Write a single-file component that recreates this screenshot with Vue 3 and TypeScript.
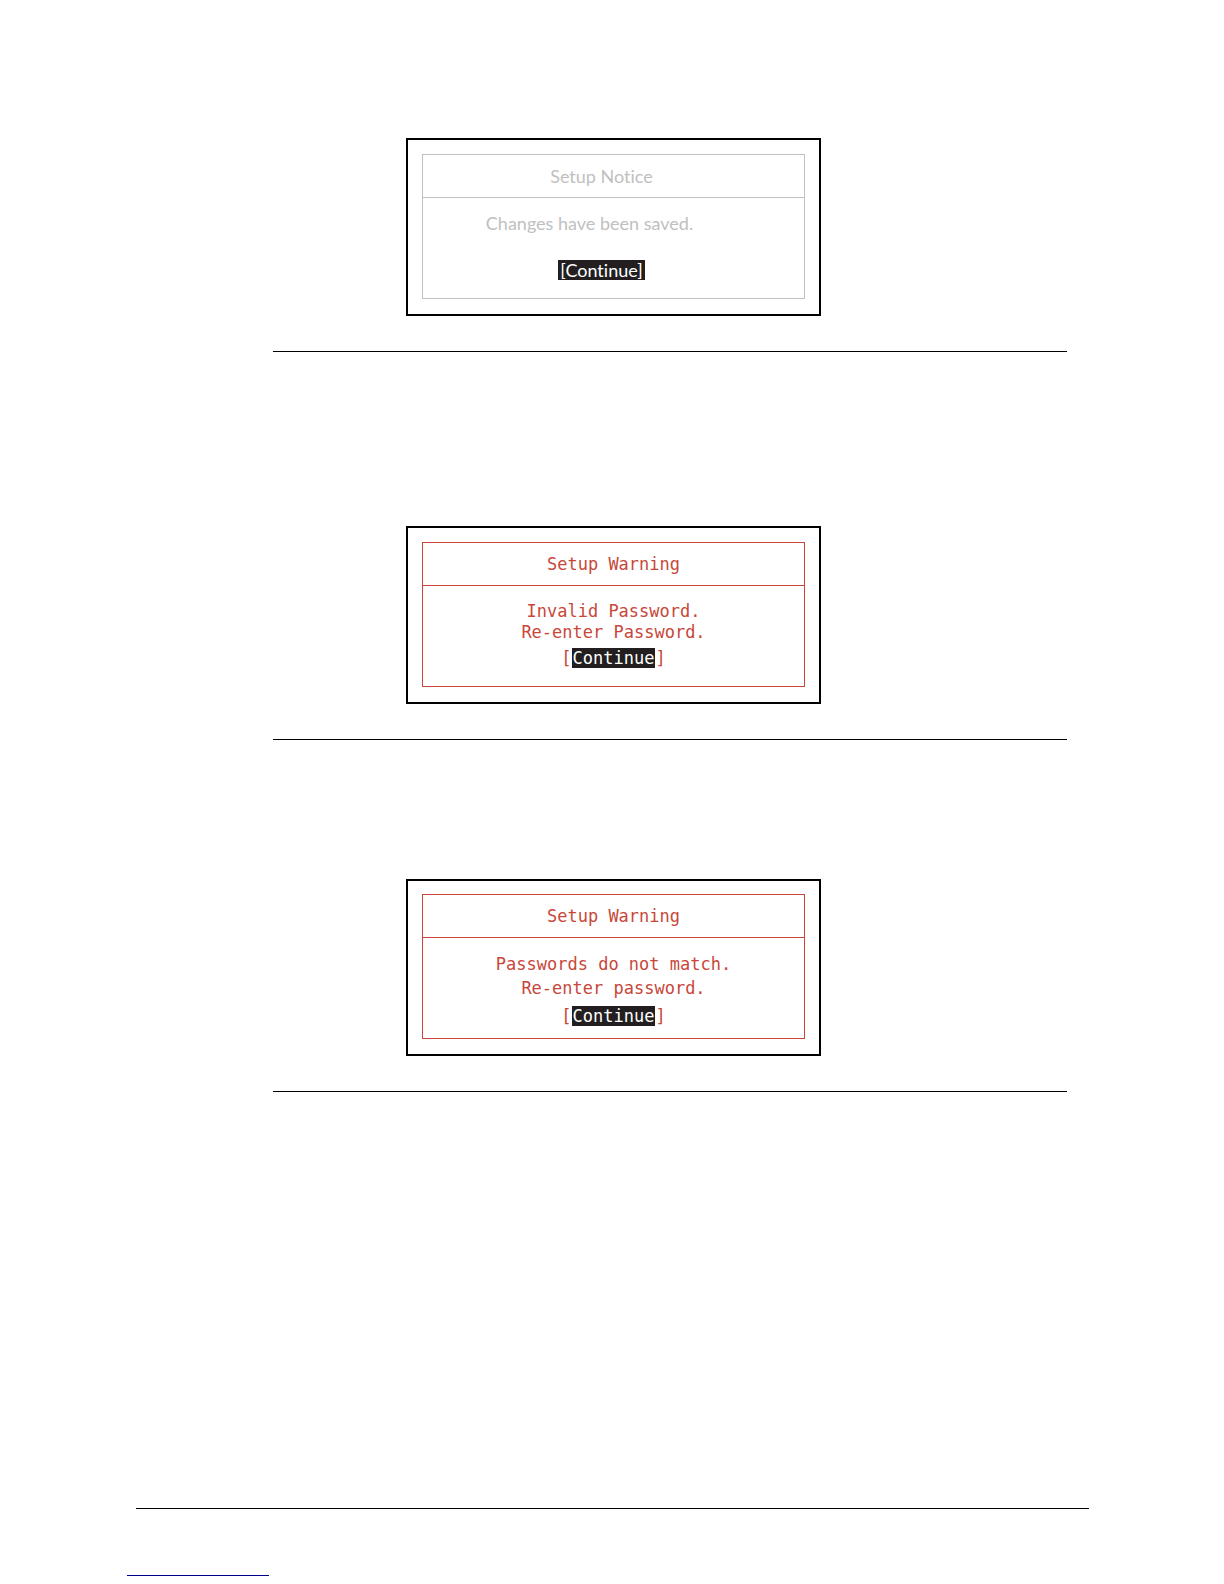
<script setup lang="ts">
interface Dialog {
  id: string
  kind: 'notice' | 'warning' | 'warning roomy'
  title: string
  lines: string[]
}

const dialogs: Dialog[] = [
  { id: 'saved', kind: 'notice', title: 'Setup Notice', lines: ['Changes have been saved.'] },
  { id: 'invalid', kind: 'warning', title: 'Setup Warning', lines: ['Invalid Password.', 'Re-enter Password.'] },
  { id: 'mismatch', kind: 'warning roomy', title: 'Setup Warning', lines: ['Passwords do not match.', 'Re-enter password.'] },
]
</script>

<template>
  <div class="page">
    <main class="content">
      <section v-for="d in dialogs" :key="d.id" class="entry" :class="d.kind">
        <div class="frame">
          <div class="panel">
            <h2 class="title">{{ d.title }}</h2>
            <div class="body">
              <p v-for="line in d.lines" :key="line" class="line">{{ line }}</p>
              <div class="actions">
                <button v-if="d.kind === 'notice'" type="button" class="continue">[Continue]</button>
                <template v-else>
                  <span>[</span><button type="button" class="continue">Continue</button><span>]</span>
                </template>
              </div>
            </div>
          </div>
        </div>
      </section>
    </main>
    <footer class="footer">
      <hr class="footer-rule">
      <hr class="link-rule">
    </footer>
  </div>
</template>

<style>
body {
  margin: 0;
  background: #fff;
}
</style>

<style scoped>
.page {
  display: flex;
  flex-direction: column;
  min-height: 100vh;
  box-sizing: border-box;
  padding: 138px 127px 8px;
}
.content {
  margin: 0 30px 0 146px;
}
.entry {
  padding: 0 0 35px 133px;
  border-bottom: 1px solid #000;
  font-variant-ligatures: none;
}
.entry + .entry {
  margin-top: 174px;
}
.entry.roomy {
  margin-top: 139px;
}
.frame {
  box-sizing: border-box;
  max-width: 415px;
  padding: 14px 14px 15px;
  border: 2px solid #000;
}
.panel {
  border: 1px solid currentColor;
  text-align: center;
}
.title {
  margin: 0;
  border-bottom: 1px solid currentColor;
  font-size: inherit;
  font-weight: 400;
  line-height: 42px;
}
.body {
  padding: 15px 0 18px;
}
.line {
  margin: 0;
  line-height: 21px;
}
.actions {
  display: flex;
  justify-content: center;
  margin-top: 5px;
  line-height: 20px;
}
.continue {
  height: 20px;
  padding: 0 1px;
  border: 0;
  background: #231f20;
  color: #fff;
  font: inherit;
  font-variant-ligatures: none;
  line-height: 20px;
}
.warning {
  font-family: "DejaVu Sans Mono", monospace;
  font-size: 17px;
}
.warning .panel {
  color: #c8473a;
}
.roomy .frame {
  padding-top: 13px;
}
.roomy .body {
  padding: 14px 0 12px;
}
.roomy .line {
  line-height: 24px;
}
.roomy .actions {
  margin-top: 6px;
}
.notice {
  font-family: Lato, sans-serif;
  font-size: 18px;
}
.notice .panel {
  color: #c0c0c0;
}
.notice .title,
.notice .actions {
  padding-right: 24px;
}
.notice .line {
  padding-right: 48px;
}
.notice .actions {
  margin-top: 26px;
}
.notice .continue {
  padding: 0 2px;
}
.footer {
  margin-top: auto;
}
.footer-rule,
.link-rule {
  border: 0;
  height: 1px;
}
.footer-rule {
  margin: 0 8px 66px 9px;
  background: #000;
}
.link-rule {
  width: 142px;
  margin: 0;
  background: #00008b;
}
</style>
